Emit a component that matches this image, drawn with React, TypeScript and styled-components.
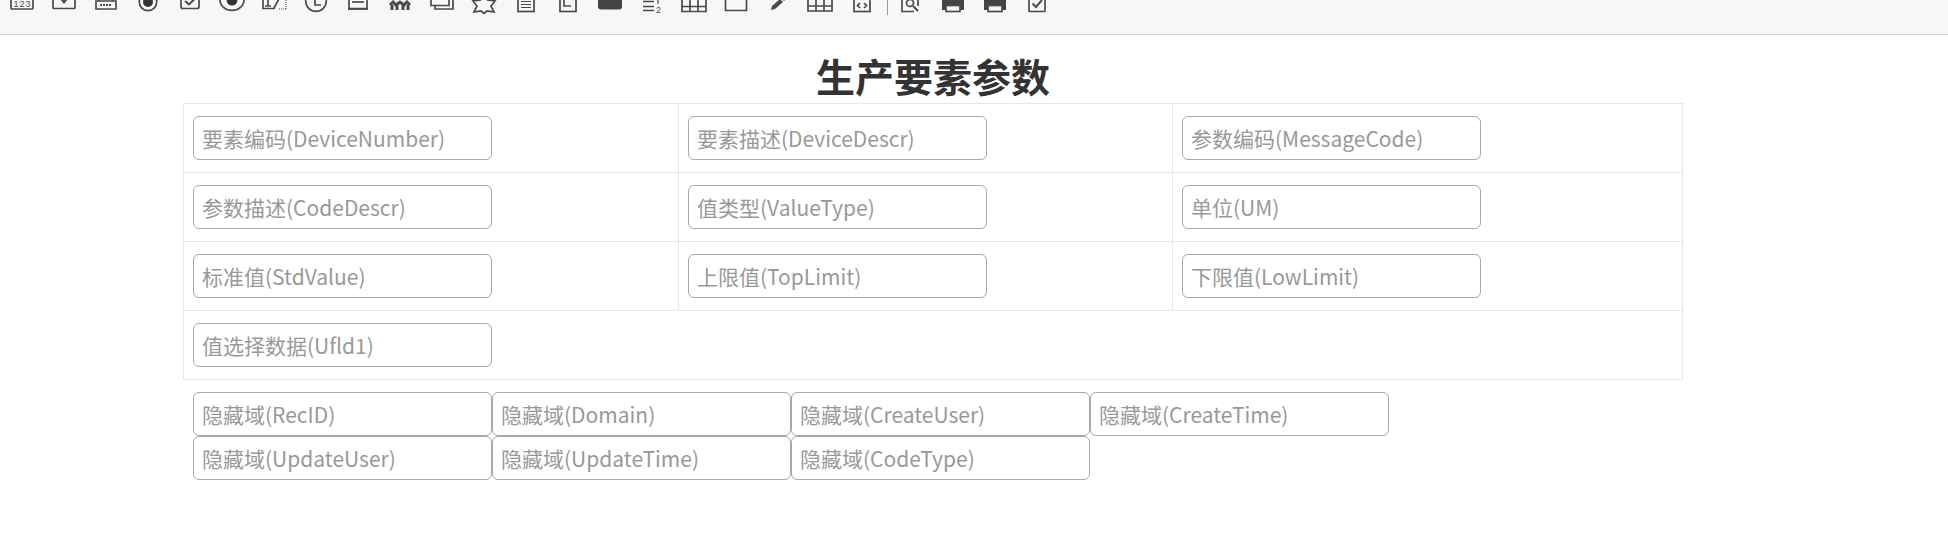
import React from "react";
import styled, {createGlobalStyle} from "styled-components";

const GlobalStyle = createGlobalStyle`
  html, body {
    margin: 0;
    padding: 0;
    background: #fff;
    font-family: "Noto Sans CJK SC", "Liberation Sans", sans-serif;
  }
  * { box-sizing: border-box; }
`;

const Toolbar = styled.div`
  display: flex;
  align-items: flex-start;
  height: 35px;
  padding-left: 1px;
  background: #f7f7f7;
  border-bottom: 1px solid #d4d4d4;
  overflow: hidden;
`;

const ToolSlot = styled.span`
  flex: none;
  display: flex;
  justify-content: center;
  width: 42px;
`;

const ToolIcon = styled.svg`
  display: block;
  width: 26px;
  height: 34px;
  fill: none;
  stroke: #4a4a4a;
  stroke-width: 1.7;
`;

const IconDigits = styled.text`
  fill: #4a4a4a;
  stroke: none;
  font-family: "Liberation Sans", sans-serif;
  font-size: 9px;
`;

const Separator = styled.span`
  flex: none;
  width: 1px;
  height: 15px;
  margin: 0 2px 0 4px;
  background: #999;
`;

const Sheet = styled.div`
  width: 1500px;
  margin-left: 183px;
`;

const Title = styled.h1`
  margin: 0;
  height: 68px;
  padding-top: 12px;
  font-size: 39px;
  line-height: 56px;
  font-weight: 700;
  text-align: center;
  color: #333;
`;

const FormTable = styled.div`
  border: 1px solid #e7e7e7;
  border-bottom: 0;
`;

const Row = styled.div`
  display: grid;
  grid-template-columns: 494px 494px 1fr;
  height: 69px;
  border-bottom: 1px solid #e7e7e7;
`;

const Cell = styled.div`
  padding: 12px 9px;
  & + & {
    border-left: 1px solid #e7e7e7;
  }
`;

const Field = styled.input`
  display: block;
  width: 299px;
  height: 44px;
  margin: 0;
  padding: 0 8px;
  border: 1px solid #a9a9a9;
  border-radius: 6px;
  background: #fff;
  font-family: inherit;
  font-size: 21px;
  outline: none;
  &::placeholder {
    color: #999;
    opacity: 1;
  }
`;

const HiddenFields = styled.div`
  display: grid;
  grid-template-columns: repeat(4, 299px);
  margin: 12px 0 0 10px;
`;

const grid = <path d="M0 -3V11.5H24V-3M0 6.5H24M8 -3V11.5M16 -3V11.5" />;
const printer = (
    <>
        <path d="M2 -4H24V10H2z" fill="#444" stroke="none" />
        <rect x="6" y="5.5" width="14" height="6" fill="#f7f7f7" />
    </>
);

const leftIcons: React.ReactNode[] = [
  <><rect x="2" y="-5" width="22" height="14" rx="1" /><IconDigits x="4.500" y="7" textLength="17">123</IconDigits></>,
  <><path d="M2 -4V7.5a1 1 0 0 0 1 1H23a1 1 0 0 0 1-1V-4" /><path d="M9 -1H17L13 4z" fill="#4a4a4a" stroke="none" /></>,
  <><path d="M3 9V1H23V9zM6 1V-3M20 1V-3" /><path d="M7 5H19" strokeWidth="2" strokeDasharray="2 1" /></>,
  <><circle cx="13" cy="2" r="8.700" /><circle cx="13" cy="2" r="5" fill="#333" stroke="none" /></>,
  <><path d="M4 -4V6.500a2 2 0 0 0 2 2H20a2 2 0 0 0 2-2V-4" /><path d="M8 1l4 3.500 6-6" strokeWidth="2" /></>,
  <><ellipse cx="13" cy="0" rx="12" ry="10.300" /><circle cx="13" cy="0" r="5.500" fill="#333" stroke="none" /></>,
  <><path d="M2 -4V8.500H14" /><path d="M7 -3V6M4 6H10" /><path d="M19 -3L13 8" /><path d="M18 9H25M25 9V-3" strokeWidth="1" strokeDasharray="1 1" /></>,
  <><circle cx="13" cy="1" r="10.300" /><path d="M12 -3V5H18" /></>,
  <><path d="M4 -4V8.500H22V-4" /><path d="M7 2H19" /><path d="M3 9H23" strokeWidth="1.800" /></>,
  <><path d="M3 5L6 2L9 5L13 2L17 5L20 2L23 5" strokeWidth="3" /><path d="M5 10V5M10 10V5M16 10V5M21 10V5" strokeWidth="3" /></>,
  <><path d="M2 -4V5.500H20V-4" /><path d="M6 6V9H24V-1H20" /></>,
  <path d="M13 -5L16.500 0L24 1L20 6L23 12L16 11L13 13.500L10 11L3 12L6 6L2 1L9.500 0Z" />,
  <><rect x="5" y="-4" width="16" height="15.500" /><path d="M8 1.500H18M8 4.500H18M8 7.500H18" strokeWidth="1.200" /></>,
  <><rect x="5" y="-4" width="16" height="15.500" /><path d="M9 -1V6H16" /></>,
  <rect x="1" y="-6" width="24" height="15.500" rx="3" fill="#444" stroke="none" />,
  <><path d="M4 1.500H15M4 6.500H15M4 10.500H15" /><path d="M19 -1V4" strokeWidth="1.200" /><IconDigits x="17" y="12.500">2</IconDigits></>,
  <g transform="translate(1 0)">{grid}</g>,
  <path d="M2.500 -4V10.500H23.500V-4" />,
  <><path d="M6 10L7 6L15 -1L18 2L10 9Z" fill="#4a4a4a" stroke="none" /><path d="M16 -2L20 -5L22 -2L19 1Z" fill="#4a4a4a" stroke="none" /></>,
  <g transform="translate(1 -0.500)">{grid}</g>,
  <><rect x="5" y="-4" width="16" height="15.500" /><path d="M11 3L8.500 5.500L11 8M15 3L17.500 5.500L15 8" /></>,
];

const rightIcons: React.ReactNode[] = [
  <><path d="M4 -4V11.500H16" /><path d="M20 -4V6" /><circle cx="12" cy="3" r="3.500" /><path d="M15 6L20 11" strokeWidth="2" /></>,
  printer,
  printer,
  <><rect x="5" y="-4" width="16" height="15.500" rx="1" /><path d="M8.500 3.500L12 7L18 0" strokeWidth="2" /></>,
];

const mainFields = [
  ["要素编码(DeviceNumber)", "要素描述(DeviceDescr)", "参数编码(MessageCode)"],
  ["参数描述(CodeDescr)", "值类型(ValueType)", "单位(UM)"],
  ["标准值(StdValue)", "上限值(TopLimit)", "下限值(LowLimit)"],
];

const hiddenFields = [
  "隐藏域(RecID)",
  "隐藏域(Domain)",
  "隐藏域(CreateUser)",
  "隐藏域(CreateTime)",
  "隐藏域(UpdateUser)",
  "隐藏域(UpdateTime)",
  "隐藏域(CodeType)",
];

function renderIcons(icons: React.ReactNode[]) {
    return icons.map((icon, i) => (
        <ToolSlot key={i}>
            <ToolIcon viewBox="0 0 26 34">{icon}</ToolIcon>
        </ToolSlot>
    ));
}

export default function App() {
    return (
        <>
            <GlobalStyle />
            <Toolbar>
                {renderIcons(leftIcons)}
                <Separator />
                {renderIcons(rightIcons)}
            </Toolbar>
            <Sheet>
                <Title>生产要素参数</Title>
                <FormTable>
                    {mainFields.map(row => (
                        <Row key={row[0]}>
                            {row.map(name => (
                                <Cell key={name}><Field placeholder={name} /></Cell>
                            ))}
                        </Row>
                    ))}
                    <Row>
                        <Cell><Field placeholder="值选择数据(Ufld1)" /></Cell>
                    </Row>
                </FormTable>
                <HiddenFields>
                    {hiddenFields.map(name => (
                        <Field key={name} placeholder={name} />
                    ))}
                </HiddenFields>
            </Sheet>
        </>
    );
}
